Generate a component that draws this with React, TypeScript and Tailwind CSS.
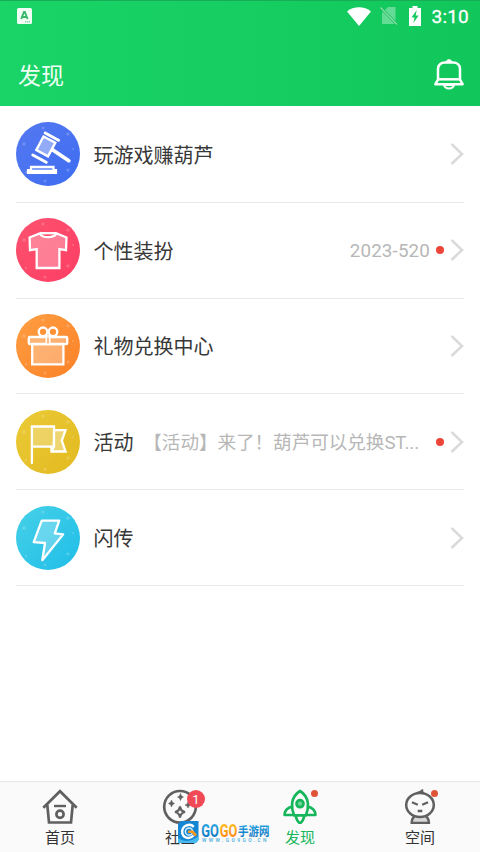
import type { ReactNode } from 'react';

const speckles = (
  <g fill="#fff" opacity="0.18">
    <circle cx="8" cy="22" r="1.8" />
    <circle cx="27" cy="6" r="1.5" />
    <circle cx="52" cy="12" r="1.8" />
    <circle cx="52" cy="48" r="1.7" />
    <circle cx="29" cy="59" r="1.5" />
    <circle cx="10" cy="50" r="1.2" />
    <circle cx="57" cy="27" r="1" />
  </g>
);

function Disc({ id, from, to, children }: { id: string; from: string; to: string; children: ReactNode }) {
  return (
    <svg className="h-16 w-16 shrink-0" viewBox="0 0 64 64" fill="none" stroke="#fff" strokeWidth="2.3">
      <defs>
        <linearGradient id={id} x1="0" y1="0" x2="1" y2="1">
          <stop offset="0" stopColor={from} />
          <stop offset="1" stopColor={to} />
        </linearGradient>
      </defs>
      <circle cx="32" cy="32" r="32" fill={`url(#${id})`} stroke="none" />
      <g stroke="none">{speckles}</g>
      {children}
    </svg>
  );
}

function Gavel() {
  return (
    <Disc id="gavel" from="#5578f2" to="#3d6df0">
      <path d="M27.500 14.500 39.300 20.800 32 34.300 20.300 28Z" fill="#fff" fillOpacity="0.4" strokeWidth="2.4" />
      <path d="M29.200 11 42.500 18.200M16.800 33 30.200 40.200" strokeWidth="3" strokeLinecap="round" />
      <path d="M36.500 27.800 52.800 38.800" strokeWidth="3.800" strokeLinecap="round" />
      <path d="M15 44.800H37.500V48H40V51H12V48H15Z" fill="#fff" fillOpacity="0.35" strokeWidth="2.2" />
      <path d="M12 49.800H40.500" strokeWidth="3.600" />
    </Disc>
  );
}

function Shirt() {
  return (
    <Disc id="shirt" from="#fc526f" to="#fd3e64">
      <path
        d="M24 15.2 13.600 19.5 14 32.2 20.7 31.2V50H43.4V31.2L50 32.2 50.5 19.5 40.3 15.2C38.7 20.500 25.5 20.500 24 15.2Z"
        fill="#fff"
        fillOpacity="0.3"
      />
      <path d="M24 15.2H40.3" />
    </Disc>
  );
}

function Gift() {
  return (
    <Disc id="gift" from="#ff9e42" to="#fb8127">
      <path d="M16.2 30H47.4V50.3H16.2Z" fill="#fff" fillOpacity="0.3" />
      <rect x="12.8" y="23" width="38.4" height="7.2" rx="1" fill="#fff" fillOpacity="0.3" />
      <circle cx="27" cy="17.800" r="4.3" />
      <circle cx="37" cy="17.800" r="4.3" />
      <path d="M32 21V30" strokeWidth="5" />
      <path d="M32 23.500V29.500" stroke="#f9a35b" strokeWidth="1.4" />
    </Disc>
  );
}

function Flag() {
  return (
    <Disc id="flag" from="#eacb38" to="#e3b91f">
      <path d="M38 20.2H49.5L45.8 30.5 49.5 41.5H35.5V36.5" fill="#fff" fillOpacity="0.34" />
      <path d="M15.9 53V16.5H38V36.6H16" fill="#fff" fillOpacity="0.26" strokeLinecap="round" />
      <path d="M35.5 41 38 36.6" />
    </Disc>
  );
}

function Bolt() {
  return (
    <Disc id="bolt" from="#46d1e8" to="#20bde8">
      <path
        d="M25.7 14.6H43.2L38.8 27.3 47.2 28.4 26.3 54.2 29 37 17.7 36.2Z"
        fill="#fff"
        fillOpacity="0.25"
        strokeLinejoin="round"
      />
    </Disc>
  );
}

function Chevron() {
  return (
    <svg className="h-6 w-[14px] shrink-0" viewBox="0 0 14 24" fill="none" stroke="#dadada" strokeWidth="2.5">
      <path d="M1.5 2 12 12 1.5 22" />
    </svg>
  );
}

type Row = { title: string; icon: ReactNode; note?: string; wide?: boolean };

const rows: Row[] = [
  { title: '玩游戏赚葫芦', icon: <Gavel /> },
  { title: '个性装扮', icon: <Shirt />, note: '2023-520' },
  { title: '礼物兑换中心', icon: <Gift /> },
  { title: '活动', icon: <Flag />, note: '【活动】来了！葫芦可以兑换ST...', wide: true },
  { title: '闪传', icon: <Bolt /> },
];

function ListRow({ title, icon, note, wide }: Row) {
  return (
    <li className="flex h-[95.8px] items-center border-b border-[#e8e8e8]">
      {icon}
      <span className="ml-[13.5px] shrink-0 pt-[3px] text-[20px] leading-none text-[#383838]">{title}</span>
      <div className="flex flex-1 items-center justify-end whitespace-nowrap">
        {note && (
          <>
            <span
              className={
                wide
                  ? 'mr-[17px] pt-[3px] text-[18.6px] leading-none tracking-[-0.05px] text-[#b7b7b7]'
                  : 'mr-[6px] pt-[2px] text-[18.8px] leading-none tracking-[0.15px] text-[#b7b7b7]'
              }
            >
              {note}
            </span>
            <i className="mr-[6px] h-2 w-2 rounded-full bg-[#ec4637]" />
          </>
        )}
        <Chevron />
      </div>
    </li>
  );
}

function StatusBar() {
  return (
    <div className="flex h-[30px] items-center pl-[17px] pr-[11px]">
      <svg className="h-4 w-[15px]" viewBox="0 0 15 16">
        <rect width="15" height="16" rx="1.5" fill="#f2fff5" />
        <path d="M4.2 11 7 4h.8l2.8 7M5.2 9h4.4" fill="none" stroke="#39b86b" strokeWidth="1.9" />
        <path d="M8 13.8h5" stroke="#39b86b" strokeWidth="0.8" strokeDasharray="1.2 0.7" />
      </svg>
      <div className="ml-auto flex items-center">
        <svg className="h-[19px] w-6" viewBox="0 0 24 19" fill="#fff">
          <path d="M0 4.400C6.500-1 17.500-1 24 4.400L12 19Z" />
        </svg>
        <svg className="ml-[9px] h-5 w-[18px]" viewBox="0 0 18 20">
          <path d="M8 1H15.500V18H2V7Z" fill="#fff" opacity="0.34" />
          <path d="M0.500 1.500 17 18.500" stroke="#10bd57" strokeWidth="2.600" />
          <path d="M0.500 1.500 17 18.500" stroke="#8bdfab" strokeWidth="1.300" />
        </svg>
        <svg className="ml-[11px] h-5 w-3" viewBox="0 0 12 20">
          <path d="M3.500 0H8.500V2H12V20H0V2H3.500Z" fill="#fff" />
          <path d="M7.800 4 2.500 11.600H5.600L4.400 17 9.600 9.500H6.600Z" fill="#12c75b" />
        </svg>
        <span className="ml-[11px] pt-px text-[19px] leading-none tracking-[0.2px] text-white [-webkit-text-stroke:0.3px_white]">3:10</span>
      </div>
    </div>
  );
}

function Bell() {
  return (
    <svg className="h-8 w-[30px]" viewBox="0 0 30 32" fill="none" stroke="#fff" strokeWidth="2.500">
      <path d="M4 21.500V11C4 7 7 4.600 11 4.600H19C23 4.600 26 7 26 11V21.500L28.600 26.200H1.400Z" strokeLinejoin="round" />
      <path d="M4 21.300H26" />
      <path d="M12 4.500C12 0.800 18 0.800 18 4.500Z" fill="#fff" strokeWidth="1" />
      <path d="M10 27C11 31.500 19 31.500 20 27Z" strokeWidth="2" />
    </svg>
  );
}

function Tab({ label, active, children }: { label: string; active?: boolean; children: ReactNode }) {
  return (
    <div className="relative flex flex-1 flex-col items-center pt-[6px]">
      <div className="relative h-9 w-9">{children}</div>
      <span className={active ? 'mt-[7px] text-[15px] leading-[15px] text-[#17b65b]' : 'mt-[7px] text-[15px] leading-[15px] text-[#333]'}>
        {label}
      </span>
    </div>
  );
}

function Watermark() {
  return (
    <div className="absolute left-[178px] top-[39px] flex h-[23px]">
      <svg className="h-[22px] w-[21px]" viewBox="0 0 21 22" fill="none">
        <path d="M3 0H20.500V19L18 22H0V3Z" fill="#1586d2" />
        <path d="M0 17C7 22 15 20 20.500 15V19L18 22H0Z" fill="#49baf0" />
        <path d="M15.800 5.800C12 1.800 4.200 4.500 4.200 10.800 4.200 17 11.500 19 15.500 14.500" stroke="#fff" strokeWidth="2.400" />
        <circle cx="11" cy="10.500" r="3.600" stroke="#d7f1ff" strokeWidth="1.500" />
        <path d="M10 10.800H14.500L18 14.500" stroke="#ff981e" strokeWidth="2.600" />
      </svg>
      <div className="ml-[2px] pt-[3px]">
        <svg className="h-[14px] w-[70px] overflow-visible" viewBox="0 0 70 14">
          <defs>
            <linearGradient id="markBlue" x1="0" y1="0" x2="0" y2="1">
              <stop offset="0" stopColor="#2caeea" />
              <stop offset="1" stopColor="#086bb8" />
            </linearGradient>
            <linearGradient id="markGold" x1="0" y1="0" x2="0" y2="1">
              <stop offset="0" stopColor="#ffc51a" />
              <stop offset="1" stopColor="#ff7a10" />
            </linearGradient>
          </defs>
          <text x="0.200" y="13" fontFamily="Roboto" fontWeight="700" fontSize="17.500" textLength="17.600" lengthAdjust="spacingAndGlyphs" fill="url(#markBlue)">GO</text>
          <text x="18.800" y="13" fontFamily="Roboto" fontWeight="700" fontSize="17.500" textLength="17.600" lengthAdjust="spacingAndGlyphs" fill="url(#markGold)">GO</text>
          <text x="37" y="12" fontFamily="Noto Sans CJK SC" fontWeight="700" fontSize="12.500" textLength="31.500" lengthAdjust="spacingAndGlyphs" fill="url(#markBlue)">手游网</text>
        </svg>
        <div className="ml-[1px] whitespace-nowrap text-[5px] font-bold leading-[5px] tracking-[2.35px] text-[#65b8df]">WWW.GO9GO.CN</div>
      </div>
    </div>
  );
}

function BottomNav() {
  return (
    <nav className="relative flex h-[71px] shrink-0 border-t border-[#e6e6e6] bg-[#fafafa]">
      <Tab label="首页">
        <svg viewBox="0 0 36 36" fill="none" stroke="#606060" strokeWidth="2.700">
          <path d="M1.300 19.800 18 3.200 34.700 19.800" />
          <path d="M5.300 17 7 34.500H29L30.700 17" />
          <path d="M12 18H24" strokeWidth="2.400" />
          <circle cx="18" cy="26.300" r="3.600" />
        </svg>
      </Tab>
      <Tab label="社区">
        <svg viewBox="0 0 36 36" fill="none" stroke="#606060" strokeWidth="2.700">
          <circle cx="18" cy="18.800" r="15.800" />
          <path d="M18 18.500C18.500 22 20 23.500 23 24 20 24.500 18.500 26 18 29.500 17.500 26 16 24.500 13 24 16 23.500 17.500 22 18 18.500Z" strokeWidth="2.200" />
          <path d="M18.500 5.500Q19 8.500 21.500 9 19 9.500 18.500 12.500 18 9.500 15.500 9 18 8.500 18.500 5.500ZM9.500 12Q10 15 12.500 15.500 10 16 9.500 19 9 16 6.500 15.500 9 15 9.500 12ZM26 14Q26.500 16.500 29 17 26.500 17.500 26 20 25.500 17.500 23 17 25.500 16.500 26 14Z" fill="#606060" stroke="#606060" strokeWidth="0.500" />
        </svg>
        <span className="absolute left-[25px] top-[2px] flex h-[18px] w-[18px] items-center justify-center rounded-full bg-[#ef4a56] text-[13px] leading-none text-white">1</span>
      </Tab>
      <Tab label="发现" active>
        <svg viewBox="0 0 36 36" fill="none" stroke="#17b65b" strokeWidth="2.700" strokeLinejoin="round">
          <path d="M12 27.300C9.500 21 7.500 9.500 18 3 28.500 9.500 26.500 21 24 27.300Z" />
          <path d="M10 18.500C5 20 2.600 22 2.600 27H12M26 18.500C31 20 33.400 22 33.400 27H24" />
          <path d="M13.800 28C14.500 31.500 16 34 18 35.300 20 34 21.500 31.500 22.200 28" />
          <circle cx="18" cy="15.700" r="3.500" fill="#72d59b" />
        </svg>
        <i className="absolute left-[29px] top-[2px] h-[7px] w-[7px] rounded-full bg-[#df5339]" />
      </Tab>
      <Tab label="空间">
        <svg viewBox="0 0 36 36" fill="none" stroke="#606060" strokeWidth="2.500">
          <path d="M13 28C10.800 29.500 9.700 31.500 9.700 34.900H26.900C26.900 31.500 25.700 29.500 23.500 28" fill="#d8d8d8" />
          <ellipse cx="18" cy="17" rx="13.800" ry="12" fill="#fafafa" />
          <path d="M14.500 4.600C17 4.500 19 3.500 20.800 1.500 20 3.200 20.300 4 22 5.200Z" fill="#606060" strokeWidth="1.200" />
          <path d="M10 14.300 15.800 16.800M26 14.300 20.200 16.800M15.700 23H20.300" strokeWidth="2.300" />
        </svg>
        <i className="absolute left-[29px] top-[2px] h-[7px] w-[7px] rounded-full bg-[#df5339]" />
      </Tab>
      <Watermark />
    </nav>
  );
}

export default function App() {
  return (
    <div className="flex h-[852px] w-[480px] flex-col overflow-hidden bg-white font-[Roboto,'Noto_Sans_CJK_SC',sans-serif]">
      <header className="h-[106px] shrink-0 border-t border-[#16ad55] bg-linear-to-r from-[#1ad468] to-[#11c75c]">
        <StatusBar />
        <div className="flex items-start justify-between pl-[18px] pr-4 pt-[27px]">
          <h1 className="pt-[3px] text-[23px] leading-8 text-[#edfff3]">发现</h1>
          <Bell />
        </div>
      </header>
      <ul className="flex-1 px-4 pt-px">
        {rows.map((row) => (
          <ListRow key={row.title} {...row} />
        ))}
      </ul>
      <BottomNav />
    </div>
  );
}
